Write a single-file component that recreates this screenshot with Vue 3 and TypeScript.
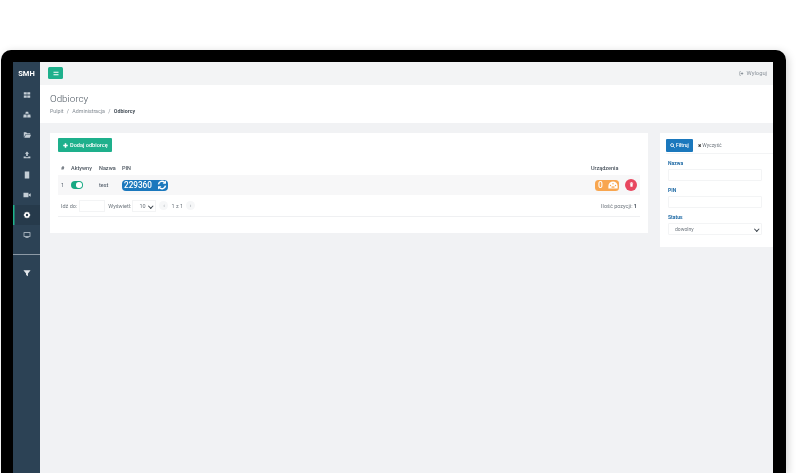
<script setup lang="ts">
const navItems = [
  { name: "dashboard", path: "M1 1.500h3.700v3H1zM5.300 1.500H9v3H5.300zM1 5.500h3.700v3H1zM5.300 5.500H9v3H5.300z" },
  { name: "cars", path: "M3.500 1h3l.6 2.500H2.900zM.8 4.500h3.600l.4 3.500H.4zM5.600 4.500h3.600l.4 3.500H5.200z" },
  { name: "files", path: "M1 1.500h3l1 1.200h4V4H3L1 8zM3.500 4.800H10L8.500 8.500H1.600z" },
  { name: "upload", path: "M5 .5 7.600 3.400H6v3H4v-3H2.400zM.8 7h2.600v.8h3.200V7h2.600v2.200H.8z" },
  { name: "sim", path: "M2.200.6h5.600v8.800H2.200z" },
  { name: "video", path: "M.6 2.200h6.200v5.600H.6zM7.200 4.400l2.400-1.600v4.400L7.200 5.600z" },
  { name: "settings", path: "M5 .6 6 2l1.700-.3.3 1.700L9.400 5 8 6.600l-.3 1.700L6 8 5 9.400 4 8l-1.700.3L2 6.600.6 5 2 3.400l.3-1.700L4 2zM5 3.500a1.500 1.500 0 1 0 0 3 1.500 1.500 0 0 0 0-3z" },
  { name: "screen", path: "M.8 1.500h8.400v5.600H.8zM1.700 2.400v3.800h6.600V2.400zM3 7.800h4v.8H3z" },
];
const activeNav = "settings";
</script>

<template>
  <div class="frame">
    <div class="screen">
      <aside class="sidebar">
        <div class="brand">SMH</div>
        <nav class="nav">
          <div
            v-for="item in navItems"
            :key="item.name"
            class="nav-item"
            :class="{ active: item.name === activeNav }"
          >
            <svg width="8" height="8" viewBox="0 0 10 10">
              <path :d="item.path" fill="currentColor" fill-rule="evenodd" />
            </svg>
          </div>
        </nav>
        <div class="nav-line"></div>
        <div class="nav-filter">
          <svg width="8" height="8" viewBox="0 0 10 10">
            <path d="M.5 1.500h9L6.200 5.500V9L3.800 7.500v-2z" fill="currentColor" />
          </svg>
        </div>
      </aside>

      <div class="main">
        <header class="topbar">
          <button class="menu-btn">
            <svg width="6" height="5" viewBox="0 0 6 5">
              <path d="M.5 .8h5v1h-5zM.5 3.200h5v1h-5z" fill="#fff" />
            </svg>
          </button>
          <span class="logout">
            <svg width="5" height="5" viewBox="0 0 10 10">
              <path d="M1 1h3v1.200H2.200v5.600H4V9H1zM5.500 2l3.500 3-3.500 3V6.200H3.500V3.800h2z" fill="currentColor" />
            </svg>
            Wyloguj
          </span>
        </header>

        <section class="page-head">
          <h1>Odbiorcy</h1>
          <div class="crumbs">Pulpit <i>/</i> Administracja <i>/</i> <b>Odbiorcy</b></div>
        </section>

        <div class="content">
          <div class="card">
            <button class="add-btn">
              <svg width="5" height="5" viewBox="0 0 10 10">
                <path d="M3.500 .5h3v3h3v3h-3v3h-3v-3h-3v-3h3z" fill="#fff" />
              </svg>
              Dodaj odbiorcę
            </button>

            <div class="t-head t-grid">
              <span>#</span><span>Aktywny</span><span>Nazwa</span><span>PIN</span><span>Urządzenia</span>
            </div>

            <div class="t-row t-grid">
              <span class="num">1</span>
              <span><i class="toggle"></i></span>
              <b class="name">test</b>
              <span>
                <span class="pin">
                  229360
                  <svg width="10" height="10" viewBox="0 0 10 10">
                    <path d="M1.500 4.300A3.600 3.600 0 0 1 7.700 2.400M8.500 5.700A3.600 3.600 0 0 1 2.300 7.600" fill="none" stroke="#fff" stroke-width="1.500" />
                    <path d="M9 .4v3.400H5.600zM1 9.600V6.200h3.400z" fill="#fff" />
                  </svg>
                </span>
              </span>
              <span class="row-actions">
                <span class="devices">
                  0
                  <svg width="10" height="8" viewBox="0 0 10 8">
                    <path d="M5 .4A4.600 4.600 0 0 0 .4 5v2.600h9.200V5A4.600 4.600 0 0 0 5 .4z" fill="#fff" />
                    <circle cx="2.500" cy="4.500" r=".7" fill="#f8a650" />
                    <circle cx="5" cy="2.800" r=".7" fill="#f8a650" />
                    <circle cx="7.500" cy="4.500" r=".7" fill="#f8a650" />
                    <rect x="3.500" y="5.400" width="3" height="1.300" fill="#f8a650" />
                  </svg>
                </span>
                <span class="del">
                  <svg width="5" height="5" viewBox="0 0 10 12">
                    <path d="M1 2h8v1.600H1zM3.500.5h3V2h-3zM2 4.200h6L7.500 11.500h-5z" fill="#fff" />
                  </svg>
                </span>
              </span>
            </div>

            <div class="pager">
              <span>Idź do:</span>
              <span class="goto"></span>
              <span class="show">Wyświetl:</span>
              <span class="per-page">10 <em></em></span>
              <span class="page-arrow">‹</span>
              <span class="pages">1 z 1</span>
              <span class="page-arrow">›</span>
              <span class="total">Ilość pozycji: <b>1</b></span>
            </div>
          </div>

          <aside class="filter">
            <div class="filter-btns">
              <button class="filter-btn">
                <svg width="5" height="5" viewBox="0 0 10 10">
                  <circle cx="4.200" cy="4.200" r="3" fill="none" stroke="#fff" stroke-width="1.600" />
                  <path d="M6.500 6.500 9.200 9.200" stroke="#fff" stroke-width="1.800" />
                </svg>
                Filtruj
              </button>
              <span class="clear-btn"><b>✖</b> Wyczyść</span>
            </div>
            <label>Nazwa</label>
            <div class="field"></div>
            <label>PIN</label>
            <div class="field"></div>
            <label>Status</label>
            <div class="field select">dowolny <em></em></div>
          </aside>
        </div>
      </div>
    </div>
  </div>
</template>

<style scoped>
.frame {
  box-sizing: border-box;
  width: 785px;
  height: 423px;
  margin: 50px 0 0 1px;
  padding: 12px 13px 0 12px;
  background: #000;
  border-radius: 10px 10px 0 0;
  box-shadow: 2px 2px 8px rgba(0, 0, 0, 0.18);
  overflow: hidden;
  font-family: Roboto, "Liberation Sans", sans-serif;
  font-size: 5.500px;
  color: #5a6470;
}
.screen {
  display: flex;
  height: 100%;
  background: #f1f2f4;
  filter: blur(0.3px);
}
.sidebar {
  flex: 0 0 27px;
  background: #2c4255;
  color: #c4ced6;
}
.brand {
  height: 23px;
  line-height: 23px;
  text-align: center;
  font-size: 7.500px;
  font-weight: 700;
  color: #fff;
}
.nav-item {
  height: 20px;
  display: flex;
  align-items: center;
  justify-content: center;
}
.nav-item.active {
  background: #263a4b;
  color: #fff;
  box-shadow: inset 1.500px 0 0 #1eb48e;
}
.nav-line {
  height: 1px;
  margin-top: 9px;
  background: #8d9aa6;
}
.nav-filter {
  display: flex;
  justify-content: center;
  margin-top: 14px;
  color: #e4e8ec;
}
.main {
  flex: 1;
  min-width: 0;
  display: flex;
  flex-direction: column;
}
.topbar {
  flex: 0 0 23px;
  box-sizing: border-box;
  display: flex;
  align-items: center;
  justify-content: space-between;
  padding: 0 6px 1px 8px;
  background: #f3f4f5;
}
.menu-btn {
  width: 15px;
  height: 12px;
  display: flex;
  align-items: center;
  justify-content: center;
  padding: 0;
  border: 0;
  border-radius: 1.500px;
  background: #1eb08c;
}
.logout {
  display: flex;
  align-items: center;
  gap: 3px;
  color: #8a929a;
  font-size: 5.800px;
}
.page-head {
  flex: 0 0 38px;
  box-sizing: border-box;
  padding: 8px 10px 0;
  background: #fff;
}
h1 {
  margin: 0;
  font-size: 9.800px;
  line-height: 11px;
  font-weight: 300;
  color: #4d5761;
}
.crumbs {
  margin-top: 4px;
  font-size: 5.300px;
  color: #838b93;
}
.crumbs i {
  margin: 0 2px;
  font-style: normal;
}
.crumbs b {
  color: #4a535c;
}
.content {
  display: flex;
  align-items: flex-start;
  gap: 12px;
  padding: 10px 0 0 10px;
}
.card {
  box-sizing: border-box;
  flex: 0 0 598px;
  height: 100px;
  padding: 5px 8px 0;
  background: #fff;
}
.add-btn {
  display: flex;
  align-items: center;
  gap: 2px;
  height: 14px;
  width: 54px;
  padding: 0 0 0 5px;
  border: 0;
  border-radius: 1px;
  background: #1eb08c;
  color: #fff;
  font: 500 5.600px Roboto, sans-serif;
}
.t-grid {
  display: grid;
  grid-template-columns: 10px 28px 23px 1fr 49px;
  align-items: center;
  padding-left: 3px;
}
.t-head {
  height: 23px;
  padding-top: 8px;
  box-sizing: border-box;
  font-weight: 500;
  color: #4d5660;
}
.t-row {
  height: 20px;
  background: #f7f7f8;
}
.toggle {
  display: block;
  position: relative;
  width: 12px;
  height: 8px;
  border-radius: 4px;
  background: #17a983;
}
.toggle::after {
  content: "";
  position: absolute;
  top: 1.200px;
  right: 1.200px;
  width: 5.600px;
  height: 5.600px;
  border-radius: 50%;
  background: #fff;
}
.name {
  font-weight: 500;
}
.pin {
  display: inline-flex;
  align-items: center;
  gap: 5px;
  height: 11px;
  padding: 0 1px 0 2px;
  border-radius: 4px;
  background: #1b78bd;
  color: #fff;
  font-size: 8.200px;
  font-weight: 500;
}
.row-actions {
  display: flex;
  align-items: center;
  gap: 6px;
  margin-left: 4px;
}
.devices {
  box-sizing: border-box;
  width: 24px;
  display: inline-flex;
  align-items: center;
  gap: 5px;
  height: 11px;
  padding: 0 1px 0 3px;
  border-radius: 3.500px;
  background: #f8a650;
  color: #fff;
  font-size: 8.500px;
  font-weight: 500;
}
.del {
  flex: 0 0 12px;
  height: 12px;
  margin-top: -1px;
  display: flex;
  align-items: center;
  justify-content: center;
  border-radius: 50%;
  background: #e8475f;
}
.pager {
  height: 21px;
  display: flex;
  align-items: center;
  padding-left: 3px;
  border-bottom: 1px solid #eff0f2;
  color: #6c747c;
}
.goto {
  width: 26px;
  height: 12px;
  margin-left: 2px;
  border: 0.500px solid #f3f4f5;
  box-sizing: border-box;
}
.show {
  margin-left: 3px;
}
.per-page {
  box-sizing: border-box;
  width: 24px;
  height: 12px;
  margin-left: 1px;
  padding: 0 0 0 6px;
  display: flex;
  align-items: center;
  justify-content: space-between;
  border: 0.500px solid #f3f4f5;
}
em {
  width: 2.500px;
  height: 2.500px;
  margin-right: 3px;
  border: solid #3d454d;
  border-width: 0 1px 1px 0;
  transform: rotate(45deg);
}
.page-arrow {
  width: 9px;
  height: 9px;
  margin: 0 3px;
  line-height: 8px;
  text-align: center;
  border-radius: 50%;
  background: #f6f7f8;
  color: #9aa1a8;
}
.total {
  margin-left: auto;
  margin-right: 3px;
}
.total b {
  color: #4d5660;
}
.filter {
  box-sizing: border-box;
  flex: 0 0 113px;
  height: 114px;
  padding: 5px 10px 0 6px;
  background: #fff;
}
.filter-btns {
  display: flex;
  align-items: center;
  gap: 2px;
  height: 14px;
  margin: 0 -10px 6px 0;
  padding-bottom: 1px;
  border-bottom: 0.500px solid #f3f4f5;
}
.filter-btn {
  display: flex;
  align-items: center;
  gap: 1px;
  width: 27px;
  height: 13px;
  padding: 0 0 0 4px;
  border: 0;
  border-radius: 1px;
  background: #1b78bd;
  color: #fff;
  font: 500 5px Roboto, sans-serif;
}
.clear-btn {
  padding: 0 3px;
  font-size: 5px;
  color: #6c747c;
}
.clear-btn b {
  font-size: 4px;
  color: #333;
}
label {
  display: block;
  margin: 0 0 3px 2px;
  font-size: 5px;
  line-height: 6px;
  font-weight: 700;
  color: #1f6aa5;
}
.field {
  box-sizing: border-box;
  height: 12px;
  margin: 0 0 6px 2px;
  width: 94px;
  border: 0.500px solid #f3f4f5;
  border-radius: 1px;
}
.select {
  display: flex;
  align-items: center;
  justify-content: space-between;
  padding-left: 6px;
  font-size: 5px;
  color: #6c747c;
}
</style>

<style>
html,
body {
  margin: 0;
  background: #fff;
  overflow: hidden;
}
</style>
